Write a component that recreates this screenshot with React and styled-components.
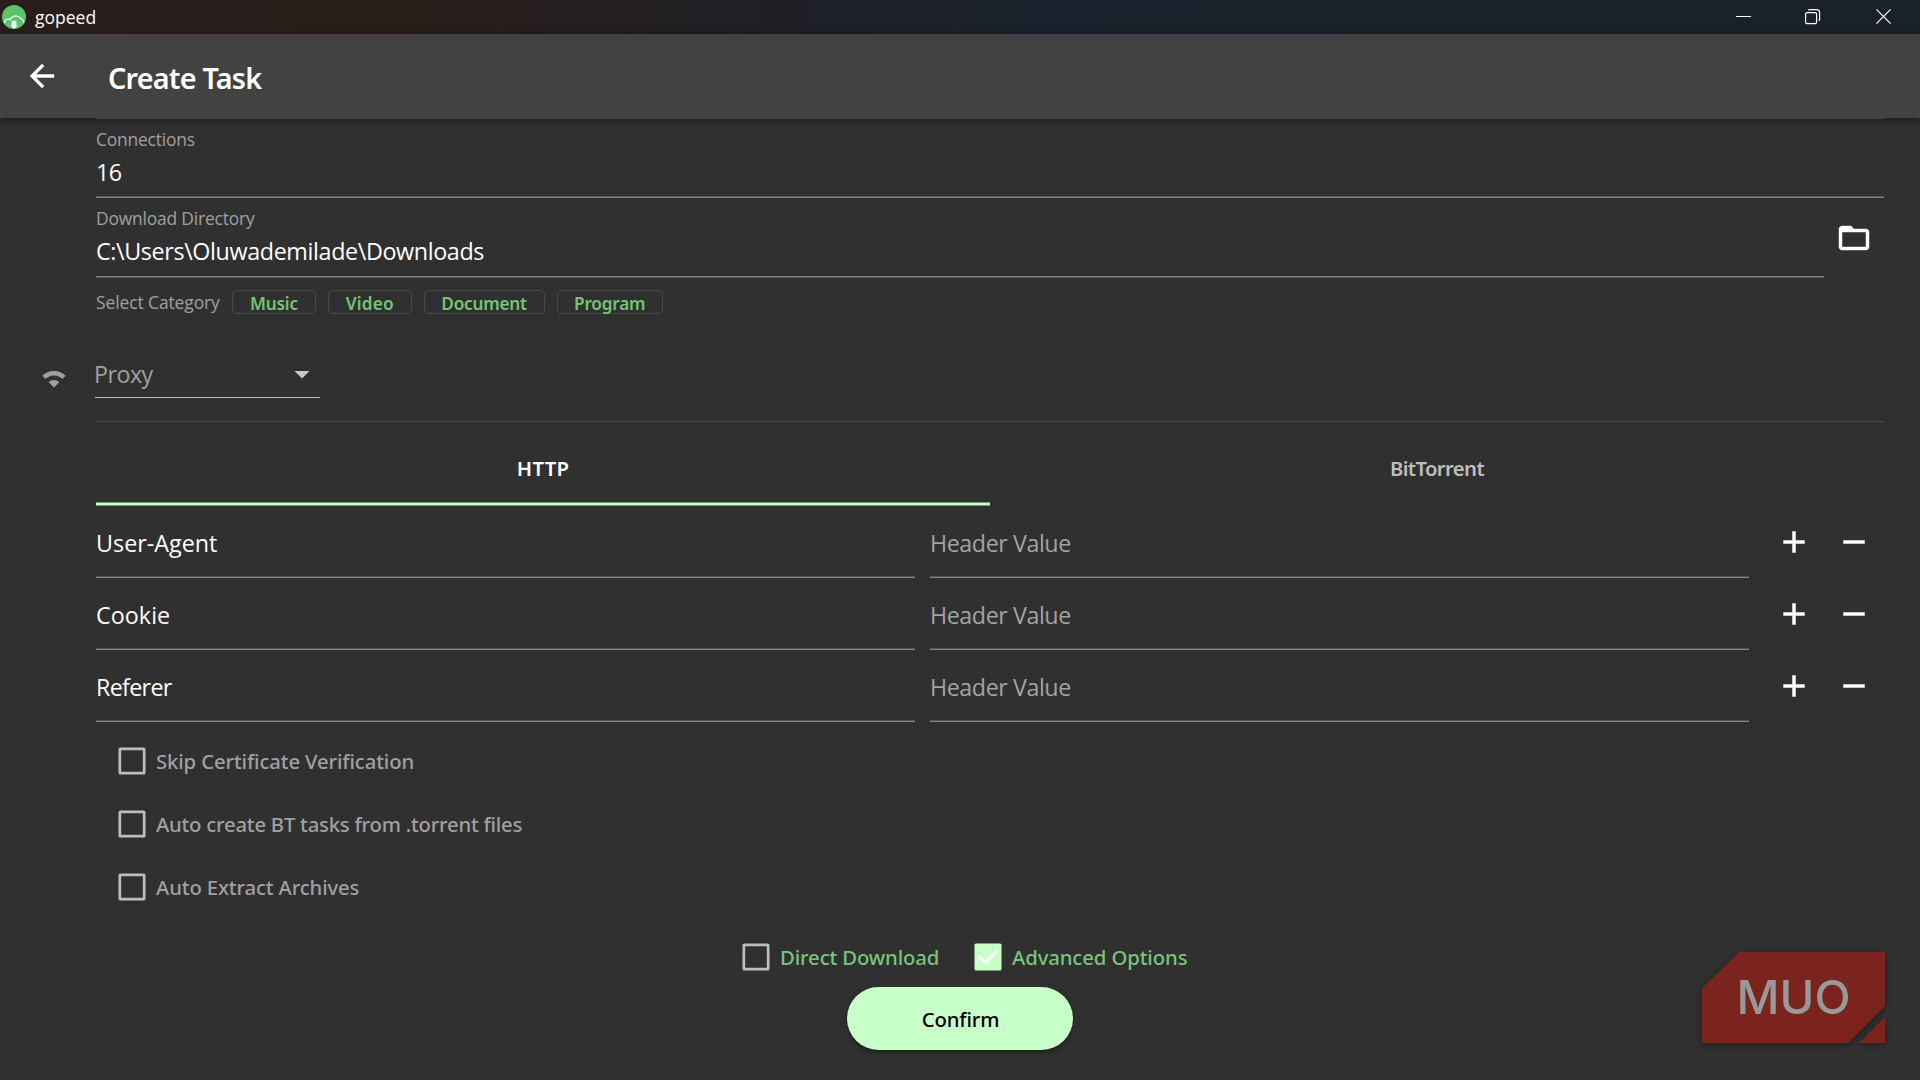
import React from "react";
import styled, { createGlobalStyle } from "styled-components";
import { MdArrowBack, MdFolderOpen, MdAdd, MdRemove, MdArrowDropDown } from "react-icons/md";

const GlobalStyle = createGlobalStyle`
  * { box-sizing: border-box; }
  body { margin: 0; background: #303030; }
`;

const Window = styled.div`
  position: relative;
  width: 1920px;
  height: 1080px;
  overflow: hidden;
  display: flex;
  flex-direction: column;
  background: #303030;
  color: #fff;
  font-family: "Open Sans", "Noto Sans", sans-serif;
  svg { display: block; flex: none; }
`;

const Text = styled.span`
  white-space: pre;
  letter-spacing: ${(p) => p.$ls || 0}px;
`;

const IconButton = styled.div`
  flex: none;
  width: 36px;
  height: 36px;
  path:not([fill="none"]) {
    stroke: #fff;
    stroke-width: 0.3;
  }
`;

const TitleBar = styled.div`
  height: 34px;
  flex: none;
  display: flex;
  align-items: center;
  padding-left: 2px;
  background: linear-gradient(90deg, #291e1c 0%, #291d1a 22%, #1e1f25 40%, #1a212c 55%, #1a2129 100%);
`;

const AppName = styled.div`
  flex: 1;
  padding: 1px 0 0 9px;
  font-size: 17.5px;
  line-height: 33px;
`;

const WindowButton = styled.div`
  width: ${(p) => p.$w}px;
  padding-left: 27px;
`;

const Header = styled.div`
  position: relative;
  z-index: 1;
  height: 84px;
  flex: none;
  display: flex;
  align-items: center;
  padding-left: 24px;
  background: #424242;
  box-shadow: 0 3px 6px rgba(0, 0, 0, 0.3), 0 2px 10px rgba(0, 0, 0, 0.12);
`;

const Title = styled.div`
  padding: 4px 0 0 48px;
  font: 600 28.8px/40px "Noto Sans", sans-serif;
`;

const Form = styled.div`
  padding: 0 36px;
`;

const Indent = styled.div`
  padding-left: 60px;
`;

const HeaderEdge = styled.div`
  position: relative;
  z-index: 2;
  height: 1px;
  background: #424242;
`;

const Field = styled.div`
  flex: 1;
  height: ${(p) => p.$h}px;
  padding-top: 8px;
  border-bottom: 1px solid ${(p) => (p.$soft ? "#5a5a5a" : "#838383")};
  box-shadow: inset 0 -1px ${(p) => (p.$soft ? "#838383" : "#5a5a5a")};
`;

const FieldLabel = styled.div`
  font-size: 17.4px;
  line-height: 24px;
  color: #a0a0a0;
`;

const FieldValue = styled.div`
  margin-top: 5px;
  font-size: 23.3px;
  line-height: 32px;
`;

const DirectoryRow = styled.div`
  display: flex;
  align-items: center;
  gap: 12px;
  padding-right: 12px;
`;

const CategoryRow = styled.div`
  display: flex;
  align-items: center;
  gap: 12px;
  margin-top: 12px;
`;

const CategoryLabel = styled.div`
  width: 124px;
  font-size: 17.4px;
  line-height: 24px;
  color: #a0a0a0;
`;

const Chip = styled.div`
  width: ${(p) => p.$w}px;
  height: 24px;
  padding-top: 1px;
  border: 1px solid #4a4a4a;
  border-radius: 5px;
  font: 600 17.2px/23px "Noto Sans", sans-serif;
  text-align: center;
  color: #76c476;
`;

const ProxyRow = styled.div`
  display: flex;
  gap: 23px;
  margin-top: 42px;
  color: #a0a0a0;
`;

const Select = styled.div`
  width: 225px;
  height: 42px;
  display: flex;
  justify-content: space-between;
  border-bottom: 1px solid #bdbdbd;
  font-size: 23.3px;
  line-height: 37px;
  text-indent: -1px;
  svg { color: #c8c8c8; }
`;

const Divider = styled.div`
  height: 1px;
  margin-top: 23px;
  background: #4a4a4a;
`;

const Tabs = styled.div`
  display: grid;
  grid-template-columns: 1fr 1fr;
`;

const Tab = styled.div`
  height: 84px;
  padding-top: 12px;
  border-bottom: 4px solid transparent;
  font: 600 20.3px/68px "Noto Sans", sans-serif;
  text-align: center;
  color: ${(p) => (p.$active ? "#fff" : "#bdbdbd")};
  background: ${(p) => p.$active
    ? "linear-gradient(#7c987a 0 1px, #c8ffc8 1px 3px, #7c987a 3px 4px) 0 100% / 100% 4px no-repeat border-box"
    : "none"};
`;

const HeaderRow = styled.div`
  display: grid;
  grid-template-columns: 819px 819px auto;
  column-gap: 15px;
  height: 72px;
`;

const Cell = styled.div`
  height: 72px;
  padding-top: 4px;
  border-bottom: 1px solid #838383;
  box-shadow: inset 0 -1px #555;
  font-size: 23.3px;
  line-height: 67px;
  color: ${(p) => (p.$placeholder ? "#a3a3a3" : "#fff")};
`;

const RowActions = styled.div`
  display: flex;
  align-items: center;
  gap: 24px;
  padding-left: 12px;
`;

const CheckList = styled.div`
  padding: 8px 0 0 22px;
`;

const CheckItem = styled.div`
  display: flex;
  gap: 10px;
  height: ${(p) => p.$h}px;
  width: ${(p) => (p.$w ? `${p.$w}px` : "auto")};
  padding-top: ${(p) => p.$top || 0}px;
  font: 500 20.3px/28px "Noto Sans", sans-serif;
  color: ${(p) => (p.$accent ? "#79c479" : "#a0a0a0")};
`;

const Footer = styled.div`
  display: flex;
  flex-direction: column;
  align-items: center;
  padding-top: 24px;
`;

const OptionRow = styled.div`
  display: flex;
  gap: 35px;
  padding-left: 9px;
`;

const Confirm = styled.button`
  width: 226px;
  height: 63px;
  padding: 0 0 0 1px;
  border: 0;
  border-radius: 32px;
  background: #c9ffc8;
  color: #000;
  font: 500 20.3px/28px "Noto Sans", sans-serif;
  box-shadow: 0 3px 3px rgba(0, 0, 0, 0.22), 0 1px 6px rgba(0, 0, 0, 0.14);
`;

const Watermark = styled.svg`
  position: absolute;
  left: 1696px;
  top: 946px;
  filter: drop-shadow(0 2px 3px rgba(0, 0, 0, 0.35));
`;

function Logo() {
  return (
    <svg width="24" height="24" viewBox="0 0 24 24">
      <circle cx="12" cy="12" r="12" fill="#5ac568" />
      <path
        d="M2.7 18.2C2.2 15.2 5 13.2 8 14.6 10.4 10 16.6 10 18.6 13.4c2 .9 3.2 2.5 3 4.6"
        fill="none" stroke="#fff" strokeWidth="1.2"
      />
      <path d="M9.7 15.8h4.6v4.4h1.6L12 24l-3.9-3.8h1.6z" fill="#fff" />
    </svg>
  );
}

function Checkbox({ checked }) {
  return (
    <svg width="28" height="28" viewBox="0 0 28 28">
      {checked ? (
        <>
          <rect x="0.5" y="0.5" width="27" height="27" rx="1.5" fill="#c9ffc8" />
          <path d="M4.6 13.2l6.6 6.6L23.6 7.3" fill="none" stroke="#fff" strokeWidth="3" />
        </>
      ) : (
        <rect x="1.85" y="1.85" width="24.3" height="24.3" rx="0.5" fill="none" stroke="#bdbdbd" strokeWidth="2.7" />
      )}
    </svg>
  );
}

const chips = [
  ["Music", 84, -0.2],
  ["Video", 83.5, 0.22],
  ["Document", 121, -0.25],
  ["Program", 106.5, -0.2],
];

const headers = [
  ["User-Agent", 0.02],
  ["Cookie", 0.05],
  ["Referer", -0.7],
];

const checks = [
  ["Skip Certificate Verification", -0.12],
  ["Auto create BT tasks from .torrent files", -0.22],
  ["Auto Extract Archives", -0.13],
];

export default function App() {
  return (
    <Window>
      <GlobalStyle />
      <TitleBar>
        <Logo />
        <AppName><Text>gopeed</Text></AppName>
        <WindowButton $w={69}>
          <svg width="16" height="16" viewBox="0 0 16 16"><path d="M0 7.5h15" stroke="#fff" /></svg>
        </WindowButton>
        <WindowButton $w={71}>
          <svg width="16" height="16" viewBox="0 0 16 16" fill="none" stroke="#fff" strokeWidth="1.2">
            <rect x="0.6" y="3.6" width="11" height="11" rx="1.6" />
            <path d="M3.3 1.4C3.7.9 4.2.6 4.8.6h6.7c1.8 0 3.1 1.3 3.1 3.1v6.5c0 .7-.3 1.2-.8 1.6" />
          </svg>
        </WindowButton>
        <WindowButton $w={71}>
          <svg width="16" height="16" viewBox="0 0 16 16"><path d="M.4.4l14.2 14.2M14.6.4L.4 14.6" stroke="#fff" strokeWidth="1.2" /></svg>
        </WindowButton>
      </TitleBar>

      <Header>
        <IconButton><MdArrowBack size={36} /></IconButton>
        <Title><Text $ls={-0.8}>Create Task</Text></Title>
      </Header>

      <Form>
        <Indent>
          <HeaderEdge />
          <Field $h={79}>
            <FieldLabel><Text $ls={-0.18}>Connections</Text></FieldLabel>
            <FieldValue><Text $ls={-0.6}>16</Text></FieldValue>
          </Field>
          <DirectoryRow>
            <Field $h={80} $soft>
              <FieldLabel><Text $ls={-0.17}>Download Directory</Text></FieldLabel>
              <FieldValue><Text $ls={-0.37}>{"C:\\Users\\Oluwademilade\\Downloads"}</Text></FieldValue>
            </Field>
            <IconButton><MdFolderOpen size={36} /></IconButton>
          </DirectoryRow>
          <CategoryRow>
            <CategoryLabel><Text $ls={-0.07}>Select Category</Text></CategoryLabel>
            {chips.map(([name, w, ls]) => (
              <Chip key={name} $w={w}><Text $ls={ls}>{name}</Text></Chip>
            ))}
          </CategoryRow>
        </Indent>

        <ProxyRow>
          <svg width="36" height="36" viewBox="0 0 24 24" fill="#a0a0a0">
            <path d="M15.53 17.46 12 21l-3.53-3.54C9.37 16.56 10.62 16 12 16s2.63.56 3.53 1.46zM12 10c-3.03 0-5.78 1.23-7.76 3.22l2.12 2.12C7.8 13.9 9.8 13 12 13s4.2.9 5.64 2.35l2.12-2.12C17.78 11.23 15.03 10 12 10z" />
          </svg>
          <Select>
            <Text $ls={-0.55}>Proxy</Text>
            <MdArrowDropDown size={36} />
          </Select>
        </ProxyRow>

        <Indent>
          <Divider />
          <Tabs>
            <Tab $active><Text $ls={0.3}>HTTP</Text></Tab>
            <Tab><Text $ls={-0.62}>BitTorrent</Text></Tab>
          </Tabs>
          {headers.map(([name, ls]) => (
            <HeaderRow key={name}>
              <Cell><Text $ls={ls}>{name}</Text></Cell>
              <Cell $placeholder><Text $ls={-0.45}>Header Value</Text></Cell>
              <RowActions>
                <IconButton><MdAdd size={36} /></IconButton>
                <IconButton><MdRemove size={36} /></IconButton>
              </RowActions>
            </HeaderRow>
          ))}
          <CheckList>
            {checks.map(([name, ls]) => (
              <CheckItem key={name} $h={63} $top={17}>
                <Checkbox />
                <Text $ls={ls}>{name}</Text>
              </CheckItem>
            ))}
          </CheckList>
        </Indent>
      </Form>

      <Footer>
        <OptionRow>
          <CheckItem $h={44} $w={197} $accent>
            <Checkbox />
            <Text $ls={-0.12}>Direct Download</Text>
          </CheckItem>
          <CheckItem $h={44} $w={213} $accent>
            <Checkbox checked />
            <Text $ls={-0.1}>Advanced Options</Text>
          </CheckItem>
        </OptionRow>
        <Confirm><Text $ls={-0.15}>Confirm</Text></Confirm>
      </Footer>

      <Watermark width="200" height="110" viewBox="1696 946 200 110">
        <path d="M1739.3 952H1885v54l-37 37h-146v-54.7z" fill="#7b241d" />
        <path d="M1885 1017v26h-26z" fill="#7b241d" />
        <text
          x="1736.5" y="1013.5" textLength="114" lengthAdjust="spacingAndGlyphs"
          fontFamily="Inter, sans-serif" fontSize="47" fontWeight="500" fill="#999"
        >MUO</text>
      </Watermark>
    </Window>
  );
}
